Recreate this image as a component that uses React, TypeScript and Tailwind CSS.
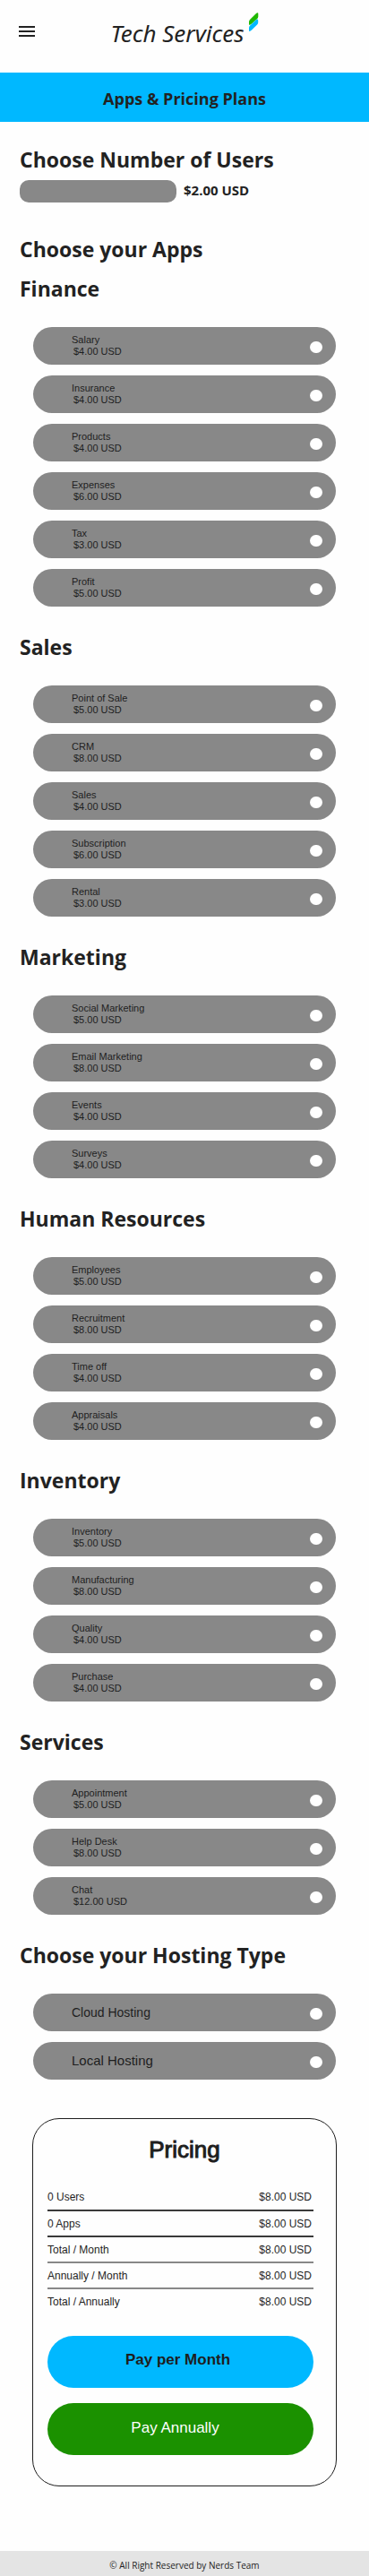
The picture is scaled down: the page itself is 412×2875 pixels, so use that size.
import React from "react";
import { MdMenu } from "react-icons/md";

type Item = { name: string; price: string };

const sections: { title: string; items: Item[] }[] = [
  {
    title: "Finance",
    items: [
      { name: "Salary", price: "$4.00 USD" },
      { name: "Insurance", price: "$4.00 USD" },
      { name: "Products", price: "$4.00 USD" },
      { name: "Expenses", price: "$6.00 USD" },
      { name: "Tax", price: "$3.00 USD" },
      { name: "Profit", price: "$5.00 USD" },
    ],
  },
  {
    title: "Sales",
    items: [
      { name: "Point of Sale", price: "$5.00 USD" },
      { name: "CRM", price: "$8.00 USD" },
      { name: "Sales", price: "$4.00 USD" },
      { name: "Subscription", price: "$6.00 USD" },
      { name: "Rental", price: "$3.00 USD" },
    ],
  },
  {
    title: "Marketing",
    items: [
      { name: "Social Marketing", price: "$5.00 USD" },
      { name: "Email Marketing", price: "$8.00 USD" },
      { name: "Events", price: "$4.00 USD" },
      { name: "Surveys", price: "$4.00 USD" },
    ],
  },
  {
    title: "Human Resources",
    items: [
      { name: "Employees", price: "$5.00 USD" },
      { name: "Recruitment", price: "$8.00 USD" },
      { name: "Time off", price: "$4.00 USD" },
      { name: "Appraisals", price: "$4.00 USD" },
    ],
  },
  {
    title: "Inventory",
    items: [
      { name: "Inventory", price: "$5.00 USD" },
      { name: "Manufacturing", price: "$8.00 USD" },
      { name: "Quality", price: "$4.00 USD" },
      { name: "Purchase", price: "$4.00 USD" },
    ],
  },
  {
    title: "Services",
    items: [
      { name: "Appointment", price: "$5.00 USD" },
      { name: "Help Desk", price: "$8.00 USD" },
      { name: "Chat", price: "$12.00 USD" },
    ],
  },
];

const totals = [
  { label: "0 Users", line: "border-[#3a3a3a]" },
  { label: "0 Apps", line: "border-[#3a3a3a]" },
  { label: "Total / Month", line: "border-[#888888]" },
  { label: "Annually / Month", line: "border-[#888888]" },
  { label: "Total / Annually", line: "border-transparent" },
];

function Heading({ children }: { children: React.ReactNode }) {
  return (
    <h2 className="px-[22px] font-['Open_Sans',sans-serif] text-[23px] leading-8 font-bold text-[#222222]">
      {children}
    </h2>
  );
}

function Option({ type, group, value, children }: { type: "checkbox" | "radio"; group: string; value: string; children: React.ReactNode }) {
  return (
    <label className="flex h-[42px] items-center justify-between rounded-full bg-[#888888] pr-[15px] pl-[43px]">
      {children}
      <input
        type={type}
        name={group}
        value={value}
        className="mt-[3px] h-[13px] w-3.5 shrink-0 appearance-none rounded-full bg-white checked:bg-[#00b8ff]"
      />
    </label>
  );
}

export default function App() {
  return (
    <div className="bg-[#fefefe] font-['Liberation_Sans',Arial,sans-serif] text-[#1e1e1e]">
      <header className="grid h-[81px] grid-cols-[1fr_auto_1fr] items-start px-[18px]">
        <button type="button" aria-label="Menu" className="mt-[23px] w-6 text-[#222222]">
          <MdMenu size={24} />
        </button>
        <a href="#" className="mt-3 flex items-start gap-1 text-[#222222]">
          <span className="pt-[9px] font-['Noto_Sans',sans-serif] text-[26px] leading-8 italic">Tech Services</span>
          <svg width="12" height="22" viewBox="0 0 12 22" className="mt-0.5" aria-hidden="true">
            <path d="M1 13.500V10.500Q1 9 2.200 7.800L8.500 1.500Q11.500 -1.200 11.300 2V4.500Q11.200 6 9.900 7.200L4 12.400Q1.500 14.600 1 13.500Z" fill="#1fb800" />
            <path d="M1 20.500V17Q1 15.500 2.200 14.400L8.500 8.600Q11.200 6.300 11.200 9V11.200Q11 12.700 9.900 13.800L4 19.600Q1.500 21.800 1 20.500Z" fill="#00b8ff" />
          </svg>
        </a>
      </header>

      <div className="flex h-[55px] items-center justify-center bg-[#00b8ff]">
        <h1 className="pt-0.5 font-['Open_Sans',sans-serif] text-lg font-bold text-[#222222]">Apps &amp; Pricing Plans</h1>
      </div>

      <main>
        <section className="pt-[26px]">
          <Heading>Choose Number of Users</Heading>
          <div className="mt-[7px] flex gap-2 px-[22px]">
            <input
              type="text"
              aria-label="Number of users"
              className="h-[25px] w-[175px] rounded-[10px] bg-[#888888] px-2 text-sm outline-none"
            />
            <span className="font-['Open_Sans',sans-serif] text-[15px] leading-[22px] font-bold text-[#222222]">$2.00 USD</span>
          </div>
        </section>

        <div className="pt-9">
          <Heading>Choose your Apps</Heading>
        </div>

        <div className="flex flex-col gap-[29px] pt-3">
          {sections.map((section) => (
            <section key={section.title}>
              <Heading>{section.title}</Heading>
              <div className="mx-[37px] mt-[27px] flex flex-col gap-3">
                {section.items.map((item) => (
                  <Option key={item.name} type="checkbox" group={section.title} value={item.name}>
                    <span className="flex flex-col text-[11px] leading-[13px]">
                      <span>{item.name}</span>
                      <span className="pl-0.5">{item.price}</span>
                    </span>
                  </Option>
                ))}
              </div>
            </section>
          ))}
          <section>
            <Heading>Choose your Hosting Type</Heading>
            <div className="mx-[37px] mt-[27px] flex flex-col gap-3">
              <Option type="radio" group="hosting" value="cloud">
                <span className="text-sm">Cloud Hosting</span>
              </Option>
              <Option type="radio" group="hosting" value="local">
                <span className="text-[15px]">Local Hosting</span>
              </Option>
            </div>
          </section>
        </div>

        <section className="mx-9 mt-[43px] rounded-[30px] border border-[#1e1e1e] pr-[25px] pb-[34px] pl-4">
          <h2 className="pt-[18px] pl-[9px] text-center text-[26px] leading-8 [-webkit-text-stroke:1px_#1e1e1e]">Pricing</h2>
          <table className="mt-[23px] w-full text-xs">
            <tbody>
              {totals.map((row) => (
                <tr key={row.label} className={`h-[29px] border-b-2 ${row.line}`}>
                  <th scope="row" className="text-left font-normal">{row.label}</th>
                  <td className="pr-0.5 text-right">$8.00 USD</td>
                </tr>
              ))}
            </tbody>
          </table>
          <div className="mt-[23px] flex flex-col gap-[17px] text-[17px]">
            <button type="button" className="h-[58px] rounded-full bg-[#00b8ff] pr-1.5 pb-1 font-bold">Pay per Month</button>
            <button type="button" className="h-[58px] rounded-full bg-[#1b9100] pr-3 pb-0.5 text-white">Pay Annually</button>
          </div>
        </section>
      </main>

      <footer className="mt-[72px] flex h-7 items-center justify-center bg-[#e4e4e4] pt-1 font-['Open_Sans',sans-serif] text-[10px] text-[#222222]">
        © All Right Reserved by Nerds Team
      </footer>
    </div>
  );
}
